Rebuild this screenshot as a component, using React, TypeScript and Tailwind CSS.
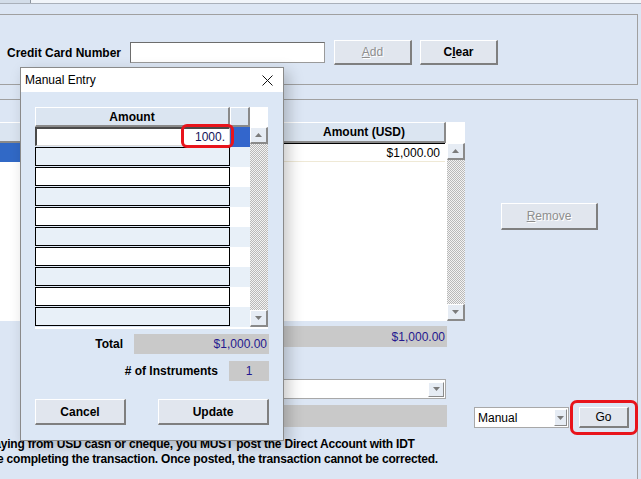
import React from "react";

const btnBase =
  "flex items-center justify-center bg-[#e1e6ee] border-t border-l border-r-2 border-b-2 border-t-white border-l-white border-r-[#7f7f7f] border-b-[#7f7f7f] text-[12px]";

function Btn({
  className = "",
  disabled = false,
  children,
}: {
  className?: string;
  disabled?: boolean;
  children: React.ReactNode;
}) {
  return (
    <div
      className={`${btnBase} ${
        disabled
          ? "text-[#8e8e8e] [text-shadow:1px_1px_0_#ffffff]"
          : "text-black font-bold"
      } ${className}`}
    >
      {children}
    </div>
  );
}

const Arrow = ({ up = false }: { up?: boolean }) => (
  <svg width="7" height="4" viewBox="0 0 7 4">
    <polygon points={up ? "0,4 7,4 3.5,0" : "0,0 7,0 3.5,4"} fill="#7b7b7b" />
  </svg>
);

const ScrollBtn = ({ up = false }: { up?: boolean }) => (
  <div className="h-[17px] w-full flex items-center justify-center bg-[#e6ecf4] border-t border-l border-t-white border-l-white border-r-2 border-b-2 border-r-[#8a8a8a] border-b-[#8a8a8a]">
    <Arrow up={up} />
  </div>
);

const Scrollbar = ({ className = "" }: { className?: string }) => (
  <div className={`flex flex-col ${className}`}>
    <ScrollBtn up />
    <div className="flex-1 bg-[repeating-conic-gradient(#b9b9b9_0_25%,#f3f3f3_0_50%)] bg-[length:2px_2px]" />
    <ScrollBtn />
  </div>
);

const headCell =
  "h-full flex items-center justify-center font-bold bg-[#dbe5f1] border-t border-l border-t-white border-l-white border-r-2 border-b-2 border-r-[#8a8a8a] border-b-[#8a8a8a]";

export default function App() {
  const rows = Array.from({ length: 10 }, (_, i) => i);

  return (
    <div className="relative w-[641px] h-[479px] overflow-hidden bg-[#dce6f4] text-[12px] text-black font-['Liberation_Sans',Arial,sans-serif]">
      {/* top strip */}
      <div className="flex h-[4px] border-b border-[#a9b0ba]">
        <div className="w-[31px] bg-[#d3dde9] border-r border-[#8c949e]" />
        <div className="flex-1 bg-[#f1f5fa]" />
      </div>

      {/* credit card group */}
      <div className="mt-[10px] -ml-[2px] w-[640px] h-[71px] border border-[#a0a0a0] pt-[25px] pl-[8px] flex items-start">
        <div className="w-[123px] h-[25px] flex items-center font-bold">
          Credit Card Number
        </div>
        <div className="mt-[2px] w-[195px] h-[21px] bg-white border border-[#9a9a9a] border-t-[#6d6d6d] border-l-[#6d6d6d]" />
        <Btn className="ml-[9px] w-[78px] h-[25px]" disabled>
          <u>A</u>dd
        </Btn>
        <Btn className="ml-[8px] w-[78px] h-[25px]">
          C<u>l</u>ear
        </Btn>
      </div>

      {/* instruments group */}
      <div className="mt-[14px] -ml-[2px] w-[640px] h-[400px] border border-[#a0a0a0] pt-[22px] flex">
        <div className="w-[466px] flex flex-col">
          {/* table */}
          <div className="h-[199px] flex flex-col">
            <div className="h-[21px] flex">
              <div className={`${headCell} w-[284px]`}>Instrument</div>
              <div className={`${headCell} w-[163px]`}>Amount (USD)</div>
              <div className="flex-1 bg-white" />
            </div>
            <div className="flex-1 flex bg-white">
              <div className="w-[448px] flex flex-col">
                <div className="h-[19px] flex">
                  <div className="w-[284px] bg-[#3169c6]" />
                  <div className="w-[162px] border-t border-black border-b border-b-[#efe9d6] flex items-center justify-end pr-[5px]">
                    $1,000.00
                  </div>
                </div>
              </div>
              <Scrollbar className="w-[18px]" />
            </div>
          </div>

          <div className="mt-[5px] ml-[150px] w-[298px] h-[21px] bg-[#c9c9c9] flex items-center justify-end pr-[2px] text-[#24188f]">
            $1,000.00
          </div>
          <div className="mt-[32px] ml-[150px] w-[297px] h-[20px] bg-white border border-[#a8a8a8] flex items-center justify-end pr-[1px]">
            <div className="w-[16px] h-[15px] flex items-center justify-center bg-[#e6ecf4] border-t border-l border-t-white border-l-white border-r border-b border-r-[#8a8a8a] border-b-[#8a8a8a]">
              <Arrow />
            </div>
          </div>
          <div className="mt-[6px] ml-[150px] w-[298px] h-[22px] bg-[#c9c9c9]" />

          <div className="mt-[10px] leading-[15px] font-bold whitespace-nowrap tracking-[-0.2px]">
            <div className="-ml-[22px]">
              If paying from USD cash or cheque, you MUST post the Direct
              Account with IDT
            </div>
            <div className="-ml-[31px]">
              before completing the transaction. Once posted, the transaction
              cannot be corrected.
            </div>
          </div>
        </div>

        <div className="flex flex-col">
          <Btn className="ml-[36px] mt-[81px] w-[97px] h-[27px]" disabled>
            <u>R</u>emove
          </Btn>
          <div className="mt-[177px] ml-[9px] flex">
            <div className="w-[95px] h-[21px] bg-white border border-[#a8a8a8] flex items-center justify-between pl-[3px] pr-[1px]">
              <span>Manual</span>
              <div className="w-[13px] h-[17px] flex items-center justify-center bg-[#e6ecf4] border-t border-l border-t-white border-l-white border-r border-b border-r-[#8a8a8a] border-b-[#8a8a8a]">
                <Arrow />
              </div>
            </div>
            <Btn className="ml-[10px] w-[50px] h-[21px] !font-normal">Go</Btn>
          </div>
        </div>
      </div>

      {/* Manual Entry dialog */}
      <div className="absolute left-[20px] top-[67px] w-[264px] h-[374px] border border-[#8a8a8a] bg-[#dce7f5] shadow-[5px_5px_14px_rgba(0,0,0,0.22)] flex flex-col">
        <div className="h-[24px] bg-white flex items-center justify-between pl-[4px] pr-[10px]">
          <span>Manual Entry</span>
          <svg width="11" height="11" viewBox="0 0 11 11">
            <path d="M0.5 0.5 L10.5 10.5 M10.5 0.5 L0.5 10.5" stroke="#111" strokeWidth="1" />
          </svg>
        </div>
        <div className="pt-[15px] px-[14px] flex flex-col">
          <div className="w-[233px] flex flex-col">
            <div className="h-[20px] flex">
              <div className={`${headCell} w-[195px]`}>Amount</div>
              <div className={`${headCell} w-[20px]`} />
              <div className="flex-1 bg-white" />
            </div>
            <div className="flex">
              <div className="w-[215px] flex flex-col">
                {rows.map((i) => (
                  <div key={i} className="h-[20px] flex">
                    {i === 0 ? (
                      <div className="w-[195px] h-[19px] bg-white border-t-2 border-l-2 border-t-[#4a4a4a] border-l-[#4a4a4a] border-r border-b border-r-[#d9d9d9] border-b-[#d9d9d9] flex items-center justify-end pr-[4px] text-[#14145a]">
                        1000.
                      </div>
                    ) : (
                      <div
                        className={`w-[195px] h-[19px] border border-black ${
                          i % 2 === 1 ? "bg-[#e8f0f8]" : "bg-white"
                        }`}
                      />
                    )}
                    <div
                      className={`w-[20px] ${
                        i === 0
                          ? "bg-[#3366cc]"
                          : i % 2 === 1
                          ? "bg-[#e8f0f8]"
                          : "bg-white"
                      }`}
                    />
                  </div>
                ))}
              </div>
              <Scrollbar className="w-[18px]" />
            </div>
            <div className="h-[2px] bg-white" />
          </div>

          <div className="mt-[5px] flex items-center justify-end">
            <span className="font-bold mr-[11px]">Total</span>
            <div className="w-[135px] h-[20px] bg-[#c9c9c9] flex items-center justify-end pr-[2px] text-[#24188f]">
              $1,000.00
            </div>
          </div>
          <div className="mt-[7px] flex items-center justify-end">
            <span className="font-bold mr-[11px]"># of Instruments</span>
            <div className="w-[40px] h-[20px] bg-[#c9c9c9] flex items-center justify-center text-[#24188f]">
              1
            </div>
          </div>
          <div className="mt-[18px] flex justify-between">
            <Btn className="w-[91px] h-[26px]">Cancel</Btn>
            <Btn className="w-[111px] h-[26px]">Update</Btn>
          </div>
        </div>
      </div>

      {/* red highlight marks */}
      <div className="absolute left-[181px] top-[124px] w-[53px] h-[24px] border-[3px] border-[#e8141c] rounded-[6px]" />
      <div className="absolute left-[570px] top-[400px] w-[68px] h-[35px] border-[3px] border-[#e8141c] rounded-[7px]" />
    </div>
  );
}
